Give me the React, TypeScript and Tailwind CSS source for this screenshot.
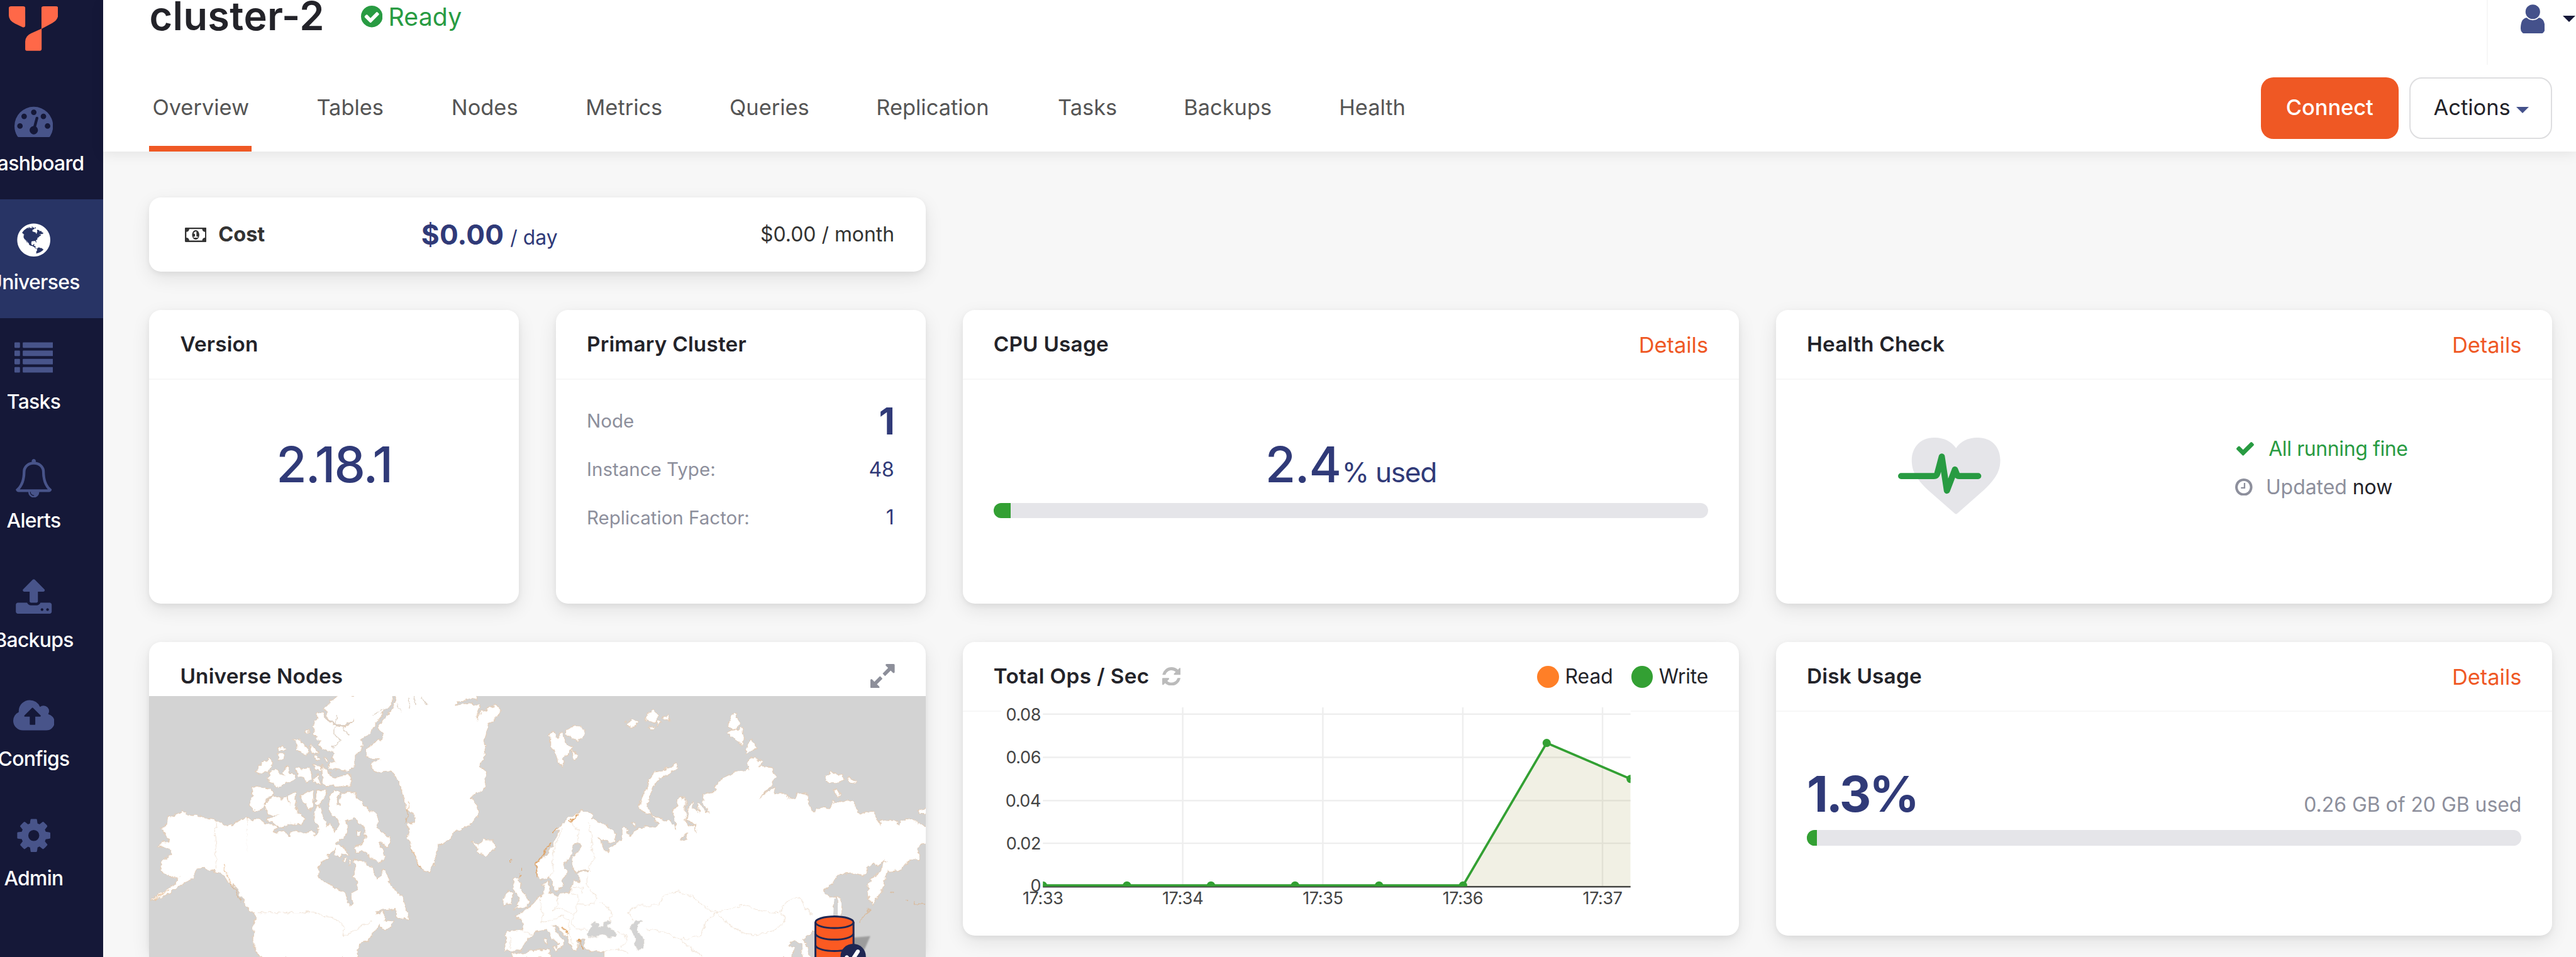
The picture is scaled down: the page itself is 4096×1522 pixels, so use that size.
import React from "react";

type GlyphProps = { d: string; box: string; className: string };

function Glyph({ d, box, className }: GlyphProps) {
  return (
    <svg viewBox={box} className={className} fill="currentColor" aria-hidden="true">
      <path d={d} />
    </svg>
  );
}

const FULL = "0 0 1792 1792";

const PATHS = {
  gauge:
    "M384 1152q0-53-37.5-90.5t-90.5-37.5-90.5 37.5-37.5 90.5 37.5 90.5 90.5 37.5 90.5-37.5 37.5-90.5zm192-448q0-53-37.5-90.5t-90.5-37.5-90.5 37.5-37.5 90.5 37.5 90.5 90.5 37.5 90.5-37.5 37.5-90.5zm428 481l101-382q6-26-7.5-48.5t-38.5-29.5-48 6.5-30 39.5l-101 382q-60 5-107 43.5t-63 98.5q-20 77 20 146t117 89 146-20 89-117q16-60-6-117t-72-91zm660-33q0-53-37.5-90.5t-90.5-37.5-90.5 37.5-37.5 90.5 37.5 90.5 90.5 37.5 90.5-37.5 37.5-90.5zm-640-640q0-53-37.5-90.5t-90.5-37.5-90.5 37.5-37.5 90.5 37.5 90.5 90.5 37.5 90.5-37.5 37.5-90.5zm448 192q0-53-37.5-90.5t-90.5-37.5-90.5 37.5-37.5 90.5 37.5 90.5 90.5 37.5 90.5-37.5 37.5-90.5zm320 448q0 261-141 483-19 29-54 29h-1402q-35 0-54-29-141-221-141-483 0-182 71-348t191-286 286-191 348-71 348 71 286 191 191 286 71 348z",
  globe:
    "M896 128q209 0 385.5 103t279.5 279.5 103 385.5-103 385.5-279.5 279.5-385.5 103-385.5-103-279.5-279.5-103-385.5 103-385.5 279.5-279.5 385.5-103zm274 521q-2 1-9.5 9.5t-13.5 9.5q2 0 4.5-5t5-11 3.5-7q6-7 22-15 14-6 52-12 34-8 51 11-2-2 9.5-13t14.5-12q3-2 15-4.5t15-7.5l2-22q-12 1-17.5-7t-6.5-21q0 2-6 8 0-7-4.5-8t-11.5 1-9 1q-10-3-15-7.5t-8-16.5-4-15q-2-5-9.5-11t-9.5-10q-1-2-2.5-5.5t-3-6.5-4-5.5-5.5-2.5-7 5-7.5 10-4.5 5q-3-2-6-1.5t-4.5 1-4.5 3-5 3.5q-3 2-8.5 3t-8.5 2q15-5-1-11-10-4-16-3 9-4 7.5-12t-8.5-14h5q-1-4-8.5-8.5t-17.5-8.5-13-6q-8-5-34-9.5t-33-.5q-5 6-4.5 10.5t4 14 3.5 12.5q1 6-5.5 13t-6.5 12q0 7 14 15.5t10 21.5q-3 8-16 16t-16 12q-5 8-1.5 18.5t10.5 16.5q2 2 1.5 4t-3.5 4.5-5.5 4-6.5 3.5l-3 2q-11 5-20.5-6t-13.5-26q-7-25-16-30-23-8-29 1-5-13-41-26-25-9-58-4 6-1 0-15-7-15-19-12 3-6 4-17.5t1-13.5q3-13 12-23 1-1 7-8.5t9.5-13.5.5-6q35 4 50-11 5-5 11.5-17t10.5-17q9-6 14-5.5t14.5 5.5 14.5 5q14 1 15.5-11t-7.5-20q12 1 3-17-4-7-8-9-12-4-27 5-8 4 2 8-1-1-9.5 10.5t-16.5 17.5-16-5q-1-1-5.5-13.5t-9.5-13.5q-8 0-16 15 3-8-11-15t-24-8q19-12-8-27-7-4-20.5-5t-19.5 4q-5 7-5.5 11.5t5 8 10.5 5.5 11.5 4 8.5 3q14 10 8 14-2 1-8.5 3.5t-11.5 4.5-6 4q-3 4 0 14t-2 14q-5-5-9-17.5t-7-16.5q7 9-25 6l-10-1q-4 0-16 2t-20.5 1-13.5-8q-4-8 0-20 1-4 4-2-4-3-11-9.5t-10-8.5q-46 15-94 41 6 1 12-1 5-2 13-6.5t10-5.5q34-14 42-7l5-5q14 16 20 25-7-4-30-1-20 6-22 12 7 12 5 18-4-3-11.5-10t-14.5-11-15-5q-16 0-22 1-146 80-235 222 7 7 12 8 4 1 5 9t2.5 11 11.5-3q9 8 3 19 1-1 44 27 19 17 21 21 3 11-10 18-1-2-9-9t-9-4q-3 5 .5 18.5t10.5 12.5q-7 0-9.5 16t-2.5 35.5-1 23.5l2 1q-3 12 5.5 34.5t21.5 19.5q-13 3 20 43 6 8 8 9 3 2 12 7.5t15 10 10 10.5q4 5 10 22.5t14 23.5q-2 6 9.5 20t10.5 23q-1 0-2.5 1t-2.5 1q3 7 15.5 14t15.5 13q1 3 2 10t3 11 8 2q2-20-24-62-15-25-17-29-3-5-5.5-15.5t-4.5-14.5q2 0 6 1.5t8.5 3.5 7.5 4 2 3q-3 7 2 17.5t12 18.5 17 19 12 13q6 6 14 19.5t0 13.5q9 0 20 10t17 20q5 8 8 26t5 24q2 7 8.5 13.5t12.5 9.5l16 8 13 7q5 2 18.5 10.5t21.5 11.5q10 4 16 4t14.5-2.5 13.5-3.5q15-2 29 15t21 21q36 19 55 11-2 1 .5 7.5t8 15.5 9 14.5 5.5 8.5q5 6 18 15t18 15q6-4 7-9-3 8 7 20t18 10q14-3 14-32-31 15-49-18 0-1-2.5-5.5t-4-8.5-2.5-8.5 0-7.5 5-3q9 0 10-3.5t-2-12.5-4-13q-1-8-11-20t-12-15q-5 9-16 8t-16-9q0 1-1.5 5.5t-1.5 6.5q-13 0-15-1 1-3 2.5-17.5t3.5-22.5q1-4 5.5-12t7.5-14.5 4-12.5-4.5-9.5-17.5-2.5q-19 1-26 20-1 3-3 10.5t-5 11.5-9 7q-7 3-24 2t-24-5q-13-8-22.5-29t-9.5-37q0-10 2.5-26.5t3-25-5.5-24.5q3-2 9-9.5t10-10.5q2-1 4.5-1.5t4.5 0 4-1.5 3-6q-1-1-4-3-3-3-4-3 7 3 28.5-1.5t27.5 1.5q15 11 22-2 0-1-2.5-9.5t-.5-13.5q5 27 29 9 3 3 15.5 5t17.5 5q3 2 7 5.5t5.5 4.5 5-.5 8.5-6.5q10 14 12 24 11 40 19 44 7 3 11 2t4.5-9.5 0-14-1.5-12.5l-1-8v-18l-1-8q-15-3-18.5-12t1.5-18.5 15-18.5q1-1 8-3.5t15.5-6.5 12.5-8q21-19 15-35 7 0 11-9-1 0-5-3t-7.5-5-4.5-2q9-5 2-16 5-3 7.5-11t7.5-10q9 12 21 2 7-8 1-16 5-7 20.5-10.5t18.5-9.5q7 2 8-2t1-12 3-12q4-5 15-9t13-5l17-11q3-4 0-4 18 2 31-11 10-11-6-20 3-6-3-9.5t-15-5.5q3-1 11.5-.5t10.5-1.5q15-10-7-16-17-5-43 12zm-163 877q206-36 351-189-3-3-12.5-4.5t-12.5-3.5q-18-7-24-8 1-7-2.5-13t-8-9-12.5-8-11-7q-2-2-7-6t-7-5.5-7.5-4.5-8.5-2-10 1l-3 1q-3 1-5.5 2.5t-5.5 3-4 3 0 2.5q-21-17-36-22-5-1-11-5.5t-10.5-7-10-1.5-11.5 7q-5 5-6 15t-2 13q-7-5 0-17.5t2-18.5q-3-6-10.5-4.5t-12 4.5-11.5 8.5-9 6.5-8.5 5.5-8.5 7.5q-3 4-6 12t-5 11q-2-4-11.5-6.5t-9.5-5.5q2 10 4 35t5 38q7 31-12 48-27 25-29 40-4 22 12 26 0 7-8 20.5t-7 21.5q0 6 2 16z",
  list:
    "M32 1280h192q32 0 32 32v192q0 32-32 32h-192q-32 0-32-32v-192q0-32 32-32zM32 896h192q32 0 32 32v192q0 32-32 32h-192q-32 0-32-32v-192q0-32 32-32zM32 512h192q32 0 32 32v192q0 32-32 32h-192q-32 0-32-32v-192q0-32 32-32zM32 128h192q32 0 32 32v192q0 32-32 32h-192q-32 0-32-32v-192q0-32 32-32zM416 1280h1344q32 0 32 32v192q0 32-32 32h-1344q-32 0-32-32v-192q0-32 32-32zM416 896h1344q32 0 32 32v192q0 32-32 32h-1344q-32 0-32-32v-192q0-32 32-32zM416 512h1344q32 0 32 32v192q0 32-32 32h-1344q-32 0-32-32v-192q0-32 32-32zM416 128h1344q32 0 32 32v192q0 32-32 32h-1344q-32 0-32-32v-192q0-32 32-32z",
  bell:
    "M912 1696q0-16-16-16-59 0-101.5-42.5t-42.5-101.5q0-16-16-16t-16 16q0 73 51.5 124.5t124.5 51.5q16 0 16-16zm-666-288h1300q-266-300-266-832 0-51-24-105t-69-103-121.5-80.5-169.5-31.5-169.5 31.5-121.5 80.5-69 103-24 105q0 532-266 832zm1482 0q0 52-38 90t-90 38h-448q0 106-75 181t-181 75-181-75-75-181h-448q-52 0-90-38t-38-90q50-42 91-88t85-119.5 74.5-158.5 50-206 19.5-260q0-152 117-282.5t307-158.5q-8-19-8-39 0-40 28-68t68-28 68 28 28 68q0 20-8 39 190 28 307 158.5t117 282.5q0 139 19.5 260t50 206 74.5 158.5 85 119.5 91 88z",
  upload:
    "M1344 1472q0-26-19-45t-45-19-45 19-19 45 19 45 45 19 45-19 19-45zm256 0q0-26-19-45t-45-19-45 19-19 45 19 45 45 19 45-19 19-45zm128-224v320q0 40-28 68t-68 28h-1472q-40 0-68-28t-28-68v-320q0-40 28-68t68-28h427q21 56 70.5 92t110.5 36h256q61 0 110.5-36t70.5-92h427q40 0 68 28t28 68zm-325-648q-17 40-59 40h-256v448q0 26-19 45t-45 19h-256q-26 0-45-19t-19-45v-448h-256q-42 0-59-40-17-39 14-69l448-448q18-19 45-19t45 19l448 448q31 30 14 69z",
  cloud:
    "M1280 864q0-14-9-23l-352-352q-9-9-23-9t-23 9l-351 351q-10 12-10 24 0 14 9 23t23 9h224v352q0 13 9.5 22.5t22.5 9.5h192q13 0 22.5-9.5t9.5-22.5v-352h224q13 0 22.5-9.5t9.5-22.5zm640 288q0 159-112.5 271.5t-271.5 112.5h-1088q-185 0-316.5-131.5t-131.5-316.5q0-130 70-240t188-165q-2-30-2-43 0-212 150-362t362-150q156 0 285.5 87t188.5 231q71-62 166-62 106 0 181 75t75 181q0 76-41 138 130 31 213.5 135.5t83.5 238.5z",
  cog:
    "M1152 896q0-106-75-181t-181-75-181 75-75 181 75 181 181 75 181-75 75-181zm512-109v222q0 12-8 23t-20 13l-185 28q-19 54-39 91 35 50 107 138 10 12 10 25t-9 23q-27 37-99 108t-94 71q-12 0-26-9l-138-108q-44 23-91 38-16 136-29 186-7 28-36 28h-222q-14 0-24.5-8.5t-11.5-21.5l-28-184q-49-16-90-37l-141 107q-10 9-25 9-14 0-25-11-126-114-165-168-7-10-7-23 0-12 8-23 15-21 51-66.5t54-70.5q-27-50-41-99l-183-27q-13-2-21-12.5t-8-23.5v-222q0-12 8-23t19-13l186-28q14-46 39-92-40-57-107-138-10-12-10-24 0-10 9-23 26-36 98.5-107.5t94.5-71.5q13 0 26 10l138 107q44-23 91-38 16-136 29-186 7-28 36-28h222q14 0 24.5 8.5t11.5 21.5l28 184q49 16 90 37l142-107q9-9 24-9 13 0 25 10 129 119 165 170 7 8 7 22 0 12-8 23-15 21-51 66.5t-54 70.5q26 50 41 98l183 28q13 2 21 12.5t8 23.5z",
  checkCircle:
    "M1412 734q0-28-18-46l-91-90q-19-19-45-19t-45 19l-408 407-226-226q-19-19-45-19t-45 19l-91 90q-18 18-18 46 0 27 18 45l362 362q19 19 45 19 27 0 46-19l543-543q18-18 18-45zm252 162q0 209-103 385.5t-279.5 279.5-385.5 103-385.5-103-279.5-279.5-103-385.5 103-385.5 279.5-279.5 385.5-103 385.5 103 279.5 279.5 103 385.5z",
  money:
    "M768 1152h384v-96h-128v-448h-114l-148 137 77 80q42-37 55-57h2v288h-128v96zm512-256q0 70-21 142t-59.5 134-101.5 101-138 39-138-39-101.5-101-59.5-134-21-142 21-142 59.5-134 101.5-101 138-39 138 39 101.5 101 59.5 134 21 142zm512 256v-512q-106 0-181-75t-75-181h-1152q0 106-75 181t-181 75v512q106 0 181 75t75 181h1152q0-106 75-181t181-75zm128-832v1152q0 26-19 45t-45 19h-1792q-26 0-45-19t-19-45v-1152q0-26 19-45t45-19h1792q26 0 45 19t19 45z",
  expand:
    "M883 1056q0 13-10 23l-332 332 144 144q19 19 19 45t-19 45-45 19h-448q-26 0-45-19t-19-45v-448q0-26 19-45t45-19 45 19l144 144 332-332q10-10 23-10t23 10l114 114q10 10 10 23zm781-864v448q0 26-19 45t-45 19-45-19l-144-144-332 332q-10 10-23 10t-23-10l-114-114q-10-10-10-23t10-23l332-332-144-144q-19-19-19-45t19-45 45-19h448q26 0 45 19t19 45z",
  refresh:
    "M1639 1056q0 5-1 7-64 268-268 434.5t-478 166.5q-146 0-282.5-55t-243.5-157l-129 129q-19 19-45 19t-45-19-19-45v-448q0-26 19-45t45-19h448q26 0 45 19t19 45-19 45l-137 137q71 66 161 102t187 36q134 0 250-65t186-179q11-17 53-117 8-23 30-23h192q13 0 22.5 9.5t9.5 22.5zm25-800v448q0 26-19 45t-45 19h-448q-26 0-45-19t-19-45 19-45l138-138q-148-137-349-137-134 0-250 65t-186 179q-11 17-53 117-8 23-30 23h-199q-13 0-22.5-9.5t-9.5-22.5v-7q65-268 270-434.5t480-166.5q146 0 284 55.5t245 156.5l130-129q19-19 45-19t45 19 19 45z",
  check:
    "M1671 566q0 40-28 68l-724 724-136 136q-28 28-68 28t-68-28l-136-136-362-362q-28-28-28-68t28-68l136-136q28-28 68-28t68 28l294 295 656-657q28-28 68-28t68 28l136 136q28 28 28 68z",
  clock:
    "M1024 544v448q0 14-9 23t-23 9h-320q-14 0-23-9t-9-23v-64q0-14 9-23t23-9h224v-352q0-14 9-23t23-9h64q14 0 23 9t9 23zm416 352q0-148-73-273t-198-198-273-73-273 73-198 198-73 273 73 273 198 198 273 73 273-73 198-198 73-273zm224 0q0 209-103 385.5t-279.5 279.5-385.5 103-385.5-103-279.5-279.5-103-385.5 103-385.5 279.5-279.5 385.5-103 385.5 103 279.5 279.5 103 385.5z",
  user:
    "M1536 1399q0 109-62.5 187t-150.5 78h-854q-88 0-150.5-78t-62.5-187q0-85 8.5-160.5t31.5-152 58.5-131 94-89 134.5-34.5q131 128 313 128t313-128q76 0 134.5 34.5t94 89 58.5 131 31.5 152 8.5 160.5zm-256-887q0 159-112.5 271.5t-271.5 112.5-271.5-112.5-112.5-271.5 112.5-271.5 271.5-112.5 271.5 112.5 112.5 271.5z",
};

const NAV = [
  { label: "Dashboard", d: PATHS.gauge, box: FULL, size: "w-[61.4px] h-[61.4px]" },
  { label: "Universes", d: PATHS.globe, box: FULL, size: "w-[61.4px] h-[61.4px]", active: true },
  { label: "Tasks", d: PATHS.list, box: FULL, size: "w-[61.4px] h-[61.4px]" },
  { label: "Alerts", d: PATHS.bell, box: FULL, size: "w-[61.4px] h-[61.4px]" },
  { label: "Backups", d: PATHS.upload, box: FULL, size: "w-[61.4px] h-[61.4px]" },
  { label: "Configs", d: PATHS.cloud, box: "0 0 1920 1792", size: "w-[65.8px] h-[61.4px]" },
  { label: "Admin", d: PATHS.cog, box: FULL, size: "w-[61.4px] h-[61.4px]" },
];

const TABS = [
  { label: "Overview", width: "w-[261px]", active: true },
  { label: "Tables", width: "w-[214.4px]" },
  { label: "Nodes", width: "w-[213.5px]" },
  { label: "Metrics", width: "w-[228.8px]" },
  { label: "Queries", width: "w-[233.2px]" },
  { label: "Replication", width: "w-[288.8px]" },
  { label: "Tasks", width: "w-[200.2px]" },
  { label: "Backups", width: "w-[247px]" },
  { label: "Health", width: "w-[180px]" },
];

function Logo() {
  return (
    <svg viewBox="27 30 150 219" preserveAspectRatio="none" className="ml-[14px] mt-[9.8px] h-[70.8px] w-[78.3px]" fill="#ff6848">
      <path d="M34 30H71Q77 30 77 38V126Q77 136 69 133L46 115Q27 100 27 75V38Q27 30 34 30z" />
      <path d="M133 30H170Q177 30 177 38V75Q176 98 160 112L126.500 141V38Q126.500 30 133 30z" />
      <path d="M127 140V241Q126 249 120 249H84Q77 249 77 241V203Q78 175 95 163z" />
    </svg>
  );
}

function Sidebar() {
  return (
    <aside className="flex w-[164px] shrink-0 flex-col overflow-hidden bg-[#151838]">
      <div className="h-[127.200px] shrink-0">
        <Logo />
      </div>
      {NAV.map((item) => (
        <div
          key={item.label}
          className={
            item.active
              ? "flex h-[189.500px] shrink-0 flex-col items-center bg-[#283465] text-white"
              : "flex h-[189.500px] shrink-0 flex-col items-center text-[#48548a]"
          }
        >
          <div className="-ml-[57px] flex w-[221px] flex-col items-center pt-[34px]">
            <Glyph d={item.d} box={item.box} className={item.size} />
            <span className="mt-[16px] whitespace-nowrap text-[31.900px] font-medium leading-[42px] text-white tracking-[-0.700px]">
              {item.label}
            </span>
          </div>
        </div>
      ))}
    </aside>
  );
}

function Header() {
  return (
    <header className="relative z-10 h-[240.600px] shrink-0 bg-white shadow-[0_4px_20px_rgba(0,0,0,0.08)]">
      <div className="flex h-[103px] items-start justify-between">
        <div className="flex h-[51px] items-center pl-[73.400px]">
          <h1 className="w-[336.700px] whitespace-nowrap text-[63px] font-semibold leading-none tracking-[0.400px] text-[#232329]">
            cluster-2
          </h1>
          <div className="mt-[2px] flex items-center gap-[9px] text-[#289b42]">
            <Glyph d={PATHS.checkCircle} box="128 128 1536 1536" className="h-[34.400px] w-[34.400px]" />
            <span className="text-[39.300px] leading-none tracking-[0.100px]">Ready</span>
          </div>
        </div>
        <div className="flex h-[103px] w-[142.500px] items-start border-l-[2.500px] border-[#f7f7f7] pl-[52px]">
          <Glyph d={PATHS.user} box="256 128 1280 1536" className="mt-[6.500px] h-[46.600px] w-[38.600px] shrink-0 text-[#44518b]" />
          <svg viewBox="0 0 20 10" className="ml-[28.600px] mt-[24.500px] h-[10px] w-[20px] shrink-0" fill="#151838">
            <path d="M0 0H20L10 10z" />
          </svg>
        </div>
      </div>
      <div className="flex h-[137.600px] items-start justify-between pl-[73.400px] pr-[38px]">
        <nav className="flex h-full">
          {TABS.map((tab) => (
            <div key={tab.label} className={tab.width}>
              <div
                className={
                  tab.active
                    ? "flex h-full w-[162.800px] items-center border-b-[9.800px] border-t-[7.800px] border-b-[#ef5824] border-t-transparent pl-[5px]"
                    : "flex h-full items-center border-b-[9.800px] border-t-[7.800px] border-transparent pl-[5px]"
                }
              >
                <span className="whitespace-nowrap text-[34.400px] leading-none text-[#555555]">{tab.label}</span>
              </div>
            </div>
          ))}
        </nav>
        <div className="mt-[19.700px] flex gap-[17.500px]">
          <button className="flex h-[98px] w-[218.700px] items-center justify-center rounded-[20px] bg-[#ef5824] text-[34.400px] font-medium leading-none text-white">
            Connect
          </button>
          <button className="flex h-[98px] w-[226.900px] items-center rounded-[20px] border-[2.500px] border-[#dedee0] bg-white pl-[36.500px] text-[34.400px] leading-none text-[#232329]">
            Actions
            <svg viewBox="0 0 20 10" className="ml-[9.500px] mt-[6px] h-[10px] w-[20px]" fill="#44518b">
              <path d="M0 0H20L10 10z" />
            </svg>
          </button>
        </div>
      </div>
    </header>
  );
}

const CARD = "flex flex-col rounded-[19px] bg-white shadow-[0_10px_30px_rgba(0,0,0,0.09),0_3px_8px_rgba(0,0,0,0.06)]";
const TITLE = "whitespace-nowrap text-[33.300px] font-semibold leading-none tracking-[0.200px] text-[#232329]";

function CardHeader({ title, details, children }: { title: string; details?: boolean; children?: React.ReactNode }) {
  return (
    <div className="flex h-[110.400px] shrink-0 items-center justify-between border-b-[2.450px] border-[#f7f7f7] px-[49px]">
      <h2 className={TITLE}>{title}</h2>
      {details && <a className="mt-[3px] text-[34.400px] leading-none text-[#ef5824]">Details</a>}
      {children}
    </div>
  );
}

function Bar({ percent }: { percent: number }) {
  return (
    <div className="h-[24.600px] overflow-hidden rounded-[12.300px] bg-[#e5e5e9]">
      <div className="h-full bg-[#33a033]" style={{ width: `${percent}%` }} />
    </div>
  );
}

function CostCard() {
  return (
    <section className="flex h-[117.800px] w-[1234.700px] shrink-0 items-center rounded-[19px] bg-white pl-[56.400px] pr-[50px] shadow-[0_10px_30px_rgba(0,0,0,0.09),0_3px_8px_rgba(0,0,0,0.06)]">
      <div className="flex w-[376px] items-center gap-[19px] text-[#333333]">
        <Glyph d={PATHS.money} box="0 256 1920 1280" className="h-[22.900px] w-[34.400px]" />
        <span className="text-[32.500px] font-bold leading-none">Cost</span>
      </div>
      <div className="flex items-baseline gap-[10px] leading-none text-[#303a78]">
        <span className="text-[44.200px] font-bold tracking-[0.200px]">$0.00</span>
        <span className="text-[31.900px]">/ day</span>
      </div>
      <span className="ml-auto text-[31.900px] leading-none text-[#333333]">$0.00 / month</span>
    </section>
  );
}

function PrimaryRow({ label, value, big }: { label: string; value: string; big?: boolean }) {
  return (
    <div className="flex h-[76.600px] items-center justify-between">
      <span className="text-[29.500px] leading-none text-[#8d8f9c]">{label}</span>
      <span
        className={
          big
            ? "text-[58.900px] font-bold leading-none tracking-[-1px] text-[#303a78]"
            : "text-[31.900px] leading-none text-[#303a78]"
        }
      >
        {value}
      </span>
    </div>
  );
}

function HeartPulse() {
  return (
    <svg viewBox="0 0 199 149" className="mt-[92.500px] h-[121.900px] w-[162.800px] shrink-0">
      <path
        d="M70.700 0C90 0 104 8 112.700 20.400C121 8 135 0 154.600 0C182 0 198.700 18 198.700 44C198.700 66 189 80 168 101L115 147.500Q112.700 149.500 110.400 147.500L57 101C36 80 26.600 66 26.600 44C26.600 18 44 0 70.700 0z"
        fill="#e5e5e9"
      />
      <path
        d="M6 74.700H70Q75 74.700 76.500 69L85 37L95 103L110.600 62L114.500 72Q115.500 74.700 119 74.700H155.800"
        fill="none"
        stroke="#289b42"
        strokeWidth="12"
        strokeLinecap="round"
        strokeLinejoin="round"
      />
    </svg>
  );
}

const Y_TICKS = [
  { label: "0.08", y: 1388, base: 1400.500 },
  { label: "0.06", y: 1472, base: 1484 },
  { label: "0.04", y: 1556, base: 1567.500 },
  { label: "0.02", y: 1639, base: 1651 },
];
const X_TICKS = [
  { label: "17:33", x: 2027 },
  { label: "17:34", x: 2298.700 },
  { label: "17:35", x: 2571 },
  { label: "17:36", x: 2843 },
  { label: "17:37", x: 3114.500 },
];
const POINTS = [
  [2027, 1721],
  [2190.300, 1721],
  [2353.600, 1721],
  [2517, 1721],
  [2680.200, 1721],
  [2843.500, 1721],
  [3006, 1444],
  [3169, 1514],
];

function OpsChart() {
  const line = POINTS.map((p) => p.join(",")).join(" ");
  return (
    <svg viewBox="1946 1370 1223 400" className="relative -mt-[10.600px] ml-[61.800px] h-[327.300px] w-[1000.700px] bg-white">
      <defs>
        <clipPath id="plot">
          <rect x="2027" y="1375" width="1142" height="348" />
        </clipPath>
      </defs>
      <g stroke="#eeeeee" strokeWidth="3">
        {Y_TICKS.map((t) => (
          <line key={t.label} x1="2027" x2="3169" y1={t.y} y2={t.y} />
        ))}
        {X_TICKS.slice(1).map((t) => (
          <line key={t.label} x1={t.x} x2={t.x} y1="1375" y2="1723" />
        ))}
      </g>
      <line x1="2027" x2="3169" y1="1723.500" y2="1723.500" stroke="#444444" strokeWidth="3" />
      <g clipPath="url(#plot)">
        <polygon points={`2027,1723 ${line} 3169,1723`} fill="rgba(145,140,50,0.13)" />
        <polyline points={line} fill="none" stroke="#33a033" strokeWidth="4.500" />
        {POINTS.map(([x, y]) => (
          <circle key={x} cx={x} cy={y} r="8" fill="#33a033" />
        ))}
      </g>
      <g fill="#444444" fontSize="33" fontFamily="Inter, sans-serif" letterSpacing="-0.5">
        {Y_TICKS.map((t) => (
          <text key={t.label} x="2023" y={t.base} textAnchor="end">
            {t.label}
          </text>
        ))}
        <text x="2023" y="1733.500" textAnchor="end">
          0
        </text>
        {X_TICKS.map((t) => (
          <text key={t.label} x={t.x} y="1758" textAnchor="middle">
            {t.label}
          </text>
        ))}
      </g>
    </svg>
  );
}

const ARCTIC = [
  "M0 725L15 740 30 745 40 730 75 735 110 755 160 765 175 780 155 795 180 805 225 800 245 830 255 800 290 795 320 805 355 805 380 795 400 825 425 775 400 745 395 700 405 655 425 655 440 680 445 720 465 750 470 775 485 755 500 780 510 815 525 790 535 760 530 725 560 725 580 740 580 815 560 835 530 850 515 870 510 905 480 925 470 950 440 975 420 1000 412 1060 440 1080 445 1100 480 1105 530 1145 0 1145z",
  "M625 965L655 970 685 970 705 1000 735 1010 740 1055 760 1075 785 1050 795 1020 815 1050 835 1100 860 1145 645 1145 640 1085 625 1060 635 1030z",
  "M530 5L500 35 450 75 465 105 480 145 520 172 570 175 610 155 625 140 620 162 590 182 545 188 500 180 470 150 440 105 415 105 405 150 390 185 395 235 410 260 440 260 420 290 440 325 490 330 510 350 500 370 510 395 480 410 480 430 550 440 600 445 630 410 630 355 665 330 672 290 660 265 690 240 715 230 740 185 780 125 800 100 840 55 845 5z",
  "M440 425L480 450 485 475 520 485 560 475 605 470 605 530 570 535 480 530 445 520z",
  "M390 405L430 420 435 445 400 430z",
  "M390 490L415 475 430 520 400 515z",
  "M275 265L300 260 325 285 355 320 350 355 325 340 290 320 300 295z",
  "M370 295L400 310 412 345 375 335z",
  "M395 358L430 365 425 377 395 374z",
  "M458 368L475 380 465 392z",
  "M180 320L210 300 230 320z",
  "M175 345L215 345 210 380 185 380z",
  "M342 205L358 205 360 228z",
  "M55 450L90 400 140 375 145 405 120 450 75 465z",
  "M125 490L135 450 165 435 190 460 220 475 215 440 235 420 245 460 275 460 270 500 230 510 180 540 160 520 130 505z",
  "M290 430L320 440 370 430 378 500 350 510 330 480 300 480z",
  "M35 540L75 535 125 550 150 580 110 620 90 670 55 680 15 645 30 590z",
  "M105 640L155 590 200 610 230 605 250 650 240 590 285 570 280 620 295 690 335 720 320 755 260 750 220 775 180 770 150 745 125 735 130 715 190 710 120 690z",
  "M310 605L345 565 385 565 390 640 365 670 340 640z",
  "M405 560L465 560 455 600 430 620 420 650 405 640z",
  "M480 590L510 565 535 570 525 610 530 655 545 655 540 620 550 575 590 575 640 580 655 615 700 665 755 700 770 740 750 770 800 810 840 840 825 880 810 890 775 850 765 860 795 900 803 950 780 980 720 950 685 910 640 915 625 895 680 870 690 830 695 790 660 760 620 715 590 735 530 725 490 700 475 660z",
  "M515 870L550 880 595 930 560 930 540 945 515 930z",
  "M640 790L665 800 655 822 640 815z",
  "M553 965L577 955 570 975z",
  "M600 970L610 975 605 990z",
];

const WEST = [
  "M490 970L508 965 512 930 530 915 540 905 556 895 575 912 600 915 625 930 650 935 675 950 692 965 715 955 735 935 752 925 755 1255 1029 1255 1050 1270 1055 1310 1068 1330 1076 1320 1075 1275 1090 1250 1202 1255 1225 1290 1232 1330 1240 1360 1248 1395 1230 1385 1210 1385 1208 1345 1155 1350 1140 1375 1165 1360 1175 1380 1172 1400 1200 1405 1190 1425 1165 1440 1160 1420 1135 1450 1130 1475 1110 1500 1095 1510 1088 1575 797 1575 780 1530 772 1490 775 1400 785 1390 770 1365 750 1335 735 1290 715 1240 690 1210 670 1175 640 1165 620 1155 600 1160 590 1200 560 1230 530 1260 500 1285 460 1308 490 1275 530 1235 550 1200 525 1200 490 1170 495 1120 525 1095 520 1075 485 1055 500 1035 520 1035z",
  "M1195 435L1170 470 1155 505 1170 540 1165 560 1145 575 1118 610 1120 640 1140 650 1160 655 1130 680 1150 715 1190 710 1210 740 1222 785 1232 850 1240 880 1265 920 1265 950 1245 950 1245 1010 1255 1070 1270 1130 1285 1160 1307 1175 1322 1140 1335 1050 1360 1035 1390 985 1430 960 1455 920 1458 870 1430 830 1475 790 1482 710 1458 690 1480 640 1475 580 1480 540 1490 495 1515 460 1525 430 1510 405 1485 425 1470 430 1450 480 1462 405 1420 398 1385 410 1400 385 1450 376 1452 355 1210 355z",
  "M1440 1035L1460 1050 1475 1030 1500 1030 1510 1060 1480 1100 1455 1085 1458 1065z",
];

const EAST = [
  "M120 540L135 530 150 560 160 525 175 590 195 600 185 620 170 640 162 690 145 650 140 620 120 590z",
  "M175 520L205 500 240 520 235 550 210 570 175 535z",
  "M195 610L215 640 205 655z",
  "M375 490L400 470 420 485 400 510z",
  "M445 460L470 430 490 455 475 485 445 475z",
  "M500 465L520 450 522 475z",
  "M480 480L497 485 485 500z",
  "M455 505L475 505 465 520z",
  "M725 490L735 455 750 445 765 490 750 515 730 510z",
  "M735 520L770 515 780 570 770 585 740 555 720 530z",
  "M800 560L822 600 800 615 780 630z",
  "M545 680L552 695 530 715 490 745 470 775 450 840 450 880 462 908 440 900 422 875 430 840 445 800 460 745 480 715 510 705z",
  "M1055 730L1070 715 1110 730 1115 750 1090 765 1065 765z",
  "M1125 745L1140 745 1158 760 1145 768z",
  "M1085 795L1105 820 1090 825z",
  "M1368 895L1395 880 1395 903 1372 903z",
  "M1088 1285L1105 1300 1112 1360 1095 1400z",
  "M320 1085L345 1035 370 1025 365 970 382 975 378 1000 395 1005 430 970 480 965 490 955 465 912 490 930 530 945 550 980 545 930 535 890 550 870 555 835 578 840 578 900 585 960 590 980 560 1030 580 1030 590 965 610 960 620 1000 615 955 585 940 590 870 605 850 600 880 625 900 620 860 655 900 660 915 655 880 640 860 640 815 680 805 685 770 715 735 755 710 795 705 790 665 815 645 835 665 830 690 870 695 885 740 870 775 825 840 880 785 885 815 920 815 925 838 950 838 960 810 990 820 1000 875 1013 905 1020 880 1070 885 1080 850 1140 850 1165 905 1220 900 1240 965 1240 940 1290 940 1305 965 1310 935 1345 935 1380 960 1400 980 1400 1035 1375 1045 1365 1070 1370 1118 1345 1115 1305 1165 1260 1170 1250 1245 1210 1330 1195 1270 1200 1220 1240 1170 1260 1120 1225 1150 1220 1135 1195 1150 1185 1190 1150 1180 1100 1185 1045 1270 1065 1290 1082 1290 1082 1340 1075 1420 1010 1450 972 1490 990 1510 1000 1575 978 1575 972 1510 950 1490 925 1510 950 1525 930 1575 400 1575 400 1085z",
];

const EUROPE = [
  "M860 145L840 150 800 190 775 200 765 180 780 160 750 145 750 215 705 240 700 270 690 260 665 265 670 290 640 280 630 230 605 200 680 228 715 210 710 180 640 125 570 95 575 75 530 55 515 50 480 70 430 95 400 130 360 165 385 165 350 235 345 260 310 300 250 350 255 420 275 450 325 425 335 460 360 510 395 490 405 445 430 405 405 380 420 325 450 305 465 250 490 235 508 255 490 290 460 320 460 380 480 400 530 392 565 400 510 408 490 415 500 470 475 455 455 480 450 530 410 525 370 545 320 525 325 490 315 460 290 480 295 540 250 560 235 600 200 615 170 645 125 660 160 685 170 745 75 750 70 860 110 865 150 865 185 810 225 775 240 750 310 735 340 790 385 820 370 860 400 830 405 805 360 755 345 715 370 720 385 745 430 775 445 830 480 865 490 800 525 800 535 850 560 865 590 860 645 870 645 905 905 905 905 145z",
  "M115 445L140 440 135 455 160 465 155 500 180 540 205 575 195 605 120 620 150 595 130 590 150 555 130 530 110 490z",
  "M60 545L90 515 112 530 105 580 60 600z",
  "M110 880L170 880 230 860 320 855 325 905 105 905z",
  "M295 790L310 795 305 825 293 820z",
  "M0 240L12 262 0 280z",
  "M345 845L375 848 365 862z",
  "M805 118L825 122 815 138z",
];

const SHEETS = [
  { t: "translate(480 1350) scale(0.33333)", paths: ARCTIC },
  { t: "translate(0 1200) scale(0.6378 0.4209)", paths: WEST },
  { t: "translate(1000 1200) scale(0.574 0.4209)", paths: EAST },
  { t: "translate(960 1560) scale(0.33333)", paths: EUROPE },
];

function WorldMap() {
  return (
    <svg viewBox="290 1353 1509 507" className="h-[415px] w-[1234.700px] shrink-0 bg-[#d3d3d3]">
      <defs>
        <g id="land">
          {SHEETS.map((s) => (
            <g key={s.t} transform={s.t}>
              {s.paths.map((d) => (
                <path key={d} d={d} vectorEffect="non-scaling-stroke" strokeLinejoin="round" />
              ))}
            </g>
          ))}
        </g>
        <filter id="rough" x="0" y="0" width="1" height="1">
          <feTurbulence type="fractalNoise" baseFrequency="0.09" numOctaves="3" seed="4" />
          <feDisplacementMap in="SourceGraphic" scale="11" xChannelSelector="R" yChannelSelector="G" />
        </filter>
        <filter id="soft">
          <feGaussianBlur stdDeviation="3" />
        </filter>
      </defs>
      <g filter="url(#rough)">
        <rect x="280" y="1343" width="1529" height="527" fill="#d3d3d3" />
        <use href="#land" fill="#ffffff" stroke="#e3cdb8" strokeWidth="2.500" />
        <use href="#land" fill="#ffffff" />
        <g fill="#d3d3d3" stroke="#e8d9c8" strokeWidth="1">
          <g transform="translate(960 1560) scale(0.33333)">
            <path d="M545 775L555 740 590 695 620 725 640 715 635 700 680 685 660 720 715 765 710 785 680 785 630 775 590 785 550 785z" />
            <path d="M790 720L830 690 865 690 835 725 850 760 870 790 875 850 845 860 820 840 825 790z" />
          </g>
          <g transform="translate(480 1350) scale(0.33333)" fill="none" stroke="#ddd0c2" strokeWidth="5">
            <path d="M515 180V235L545 270 500 310M560 185L590 240M520 175V120M730 120L800 85M870 50L900 100M950 10L940 85M1010 10L1055 60M975 15L985 60" />
          </g>
        </g>
        <g fill="none" stroke="#dfa468" strokeWidth="2">
          <path d="M992 1672v6M1016 1688v7M1011 1700l-4 4M1083 1609l-8 9M1070 1640l-12 18-16 20 2 24M1106 1598l20-16M1126 1826l8 20M1105 1815l-12-14" />
          <path d="M1690 1765l-20 28M1731 1734l8 2M1758 1750l6 2M1775 1755l22 4" strokeOpacity="0.5" />
          <path d="M435 1680l12 34 22 40M300 1748l30-20M795 1560l-6 40M800 1650l18 40" strokeOpacity="0.5" />
        </g>
        <g fill="none" stroke="#f3e8dd" strokeWidth="1.600">
          <path d="M420 1596V1690M500 1774H616L630 1781 648 1783 670 1802 666 1819 722 1790" />
          <g transform="translate(1000 1200) scale(0.574 0.4209)" strokeWidth="3">
            <path d="M400 1400L385 1360 420 1330 490 1330 500 1290 555 1265 605 1290 640 1340 685 1360 645 1410 630 1470 560 1490 500 1450 450 1440M690 1360L770 1330 850 1360 905 1365 915 1410 870 1450 810 1470 745 1440 690 1370M900 1360L930 1300 965 1295 985 1345 1010 1375M560 1490L600 1530 640 1568" />
          </g>
          <g transform="translate(960 1560) scale(0.33333)" strokeWidth="4">
            <path d="M400 150L370 220 345 300 345 400 330 430M450 110L490 160V235M550 110L565 180 575 290 590 325 550 395M540 410L545 490 600 550 580 595 490 590V540L455 530M370 545L375 600 340 630 390 615 430 640 470 650 490 590M620 580L695 640 670 690M270 560L265 620 290 650 270 700 320 690 400 660 440 690M470 650L450 700 480 740 540 740M170 750L230 775M100 775L90 850M430 690L440 760 460 830M720 750L780 790 740 850M455 490L520 495 510 530M645 870L720 855 780 880" />
          </g>
        </g>
      </g>
      <g transform="translate(1500 1560) scale(0.33333)">
        <path d="M365 560L385 560V670H358z" fill="#d3d3d3" />
        <path d="M440 790L575 778 520 905H575V930H440z" fill="#000000" fillOpacity="0.26" filter="url(#soft)" />
        <path d="M255 698V930H477V698" fill="#fb5a22" stroke="#1f2753" strokeWidth="11" />
        <ellipse cx="366" cy="698" rx="111" ry="34" fill="#fb5a22" stroke="#1f2753" strokeWidth="11" />
        <path d="M255 766C275 810 457 810 477 766M255 834C275 876 457 876 477 834" fill="none" stroke="#1f2753" strokeWidth="11" />
        <circle cx="475" cy="897" r="74" fill="#1f2753" />
        <path d="M438 902L462 930 502 868" fill="none" stroke="#ffffff" strokeWidth="23" strokeLinecap="round" strokeLinejoin="round" />
      </g>
    </svg>
  );
}

export default function App() {
  return (
    <div className="flex h-[1522px] w-[4096px] overflow-hidden bg-[#f7f7f7] font-['Inter',sans-serif]">
      <Sidebar />
      <main className="flex min-w-0 flex-1 flex-col">
        <Header />
        <div className="flex flex-col gap-[61.400px] pl-[73.400px] pt-[73.600px]">
          <CostCard />
          <div className="grid w-[3821px] grid-cols-3 gap-x-[58.900px] gap-y-[61.400px]">
            <div className="grid h-[466.400px] grid-cols-2 gap-[58.900px]">
              <section className={CARD}>
                <CardHeader title="Version" />
                <div className="pt-[96.500px] text-center text-[78.500px] font-medium leading-[78px] tracking-[-1.800px] text-[#303a78]">
                  2.18.1
                </div>
              </section>
              <section className={CARD}>
                <CardHeader title="Primary Cluster" />
                <div className="flex flex-col pl-[49px] pr-[50px] pt-[28px]">
                  <PrimaryRow label="Node" value="1" big />
                  <PrimaryRow label="Instance Type:" value="48" />
                  <PrimaryRow label="Replication Factor:" value="1" />
                </div>
              </section>
            </div>
            <section className={CARD}>
              <CardHeader title="CPU Usage" details />
              <div className="flex flex-col px-[49px] pt-[96px]">
                <div className="mb-[22px] flex h-[78px] items-baseline justify-center gap-[2px] leading-none text-[#303a78]">
                  <span className="text-[78.500px] font-medium tracking-[-1.200px]">2.4</span>
                  <span className="text-[44.200px] tracking-[-1.300px]">% used</span>
                </div>
                <Bar percent={2.4} />
              </div>
            </section>
            <section className={CARD}>
              <CardHeader title="Health Check" details />
              <div className="flex pl-[194.500px]">
                <HeartPulse />
                <div className="ml-[373px] flex flex-col pt-[80px] text-[31.900px] leading-none">
                  <div className="flex h-[60.600px] items-center text-[#289b42]">
                    <Glyph d={PATHS.check} box="121 334 1550 1188" className="ml-[2px] h-[21.400px] w-[27.900px]" />
                    <span className="ml-[23px] tracking-[-0.350px]">All running fine</span>
                  </div>
                  <div className="flex h-[60.600px] items-center text-[#8d8f9c]">
                    <Glyph d={PATHS.clock} box="128 128 1536 1536" className="h-[27.600px] w-[27.600px]" />
                    <span className="ml-[21px]">
                      Updated <span className="text-[#232329]">now</span>
                    </span>
                  </div>
                </div>
              </div>
            </section>

            <section className={CARD}>
              <div className="flex h-[85.800px] shrink-0 items-center justify-between px-[49px] pt-[22.200px]">
                <h2 className={TITLE}>Universe Nodes</h2>
                <Glyph d={PATHS.expand} box="128 128 1536 1536" className="h-[38.600px] w-[38.600px] text-[#8d8f9a]" />
              </div>
              <WorldMap />
            </section>
            <section className={`${CARD} h-[466.400px]`}>
              <div className="flex h-[110.400px] shrink-0 items-center justify-between border-b-[2.450px] border-[#f7f7f7] px-[49px] text-[#232329]">
                <div className="flex items-center gap-[20px]">
                  <h2 className="whitespace-nowrap text-[33.300px] font-semibold leading-none tracking-[0.350px]">Total Ops / Sec</h2>
                  <Glyph d={PATHS.refresh} box="128 128 1536 1536" className="h-[29.500px] w-[29.500px] text-[#bbbbbb]" />
                </div>
                <div className="mt-[2px] flex items-center text-[31.900px] leading-none">
                  <span className="h-[34.400px] w-[34.400px] rounded-full bg-[#ff7f27]" />
                  <span className="ml-[10px]">Read</span>
                  <span className="ml-[29px] h-[34.400px] w-[34.400px] rounded-full bg-[#33a033]" />
                  <span className="ml-[9.500px] tracking-[-0.200px]">Write</span>
                </div>
              </div>
              <OpsChart />
            </section>
            <section className={`${CARD} h-[466.400px]`}>
              <CardHeader title="Disk Usage" details />
              <div className="flex flex-col px-[49px] pt-[92.100px]">
                <div className="mb-[18.500px] flex h-[78px] items-baseline justify-between leading-none">
                  <span className="text-[78.500px] font-bold tracking-[-3.200px] text-[#303a78]">1.3%</span>
                  <span className="text-[31.900px] text-[#8d8f9c]">0.26 GB of 20 GB used</span>
                </div>
                <Bar percent={1.4} />
              </div>
            </section>
          </div>
        </div>
      </main>
    </div>
  );
}
